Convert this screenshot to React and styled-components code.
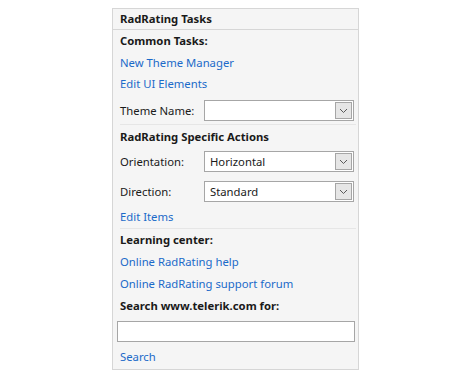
import React from "react";
import styled, { createGlobalStyle } from "styled-components";

const GlobalStyle = createGlobalStyle`
    html, body {
        margin: 0;
        padding: 0;
        background: #ffffff;
    }
    body {
        font-family: "Noto Sans", "Open Sans", sans-serif;
        font-size: 11.3px;
        color: #1a1a1a;
    }
`;

const Panel = styled.div`
    box-sizing: border-box;
    width: 247px;
    height: 362px;
    margin: 8px 0 0 112px;
    background: #f5f5f5;
    border: 1px solid #d6d6d6;
    display: flex;
    flex-direction: column;
`;

const Header = styled.div`
    height: 20px;
    line-height: 20px;
    padding-left: 7px;
    font-weight: 700;
    border-bottom: 1px solid #d6d6d6;
`;

const Body = styled.div`
    display: flex;
    flex-direction: column;
    padding: 0 2px 0 7px;
`;

const Title = styled.div`
    height: ${(p) => p.$h || 22}px;
    line-height: ${(p) => p.$h || 22}px;
    font-weight: 700;
    white-space: nowrap;
`;

const Link = styled.a`
    display: block;
    height: ${(p) => p.$h || 21}px;
    line-height: ${(p) => p.$h || 21}px;
    margin-top: ${(p) => p.$top || 0}px;
    color: #1b6ac9;
    text-decoration: none;
    white-space: nowrap;
    cursor: pointer;
`;

const Field = styled.div`
    display: flex;
    align-items: center;
    margin-top: ${(p) => p.$top || 0}px;
`;

const Label = styled.div`
    width: 84px;
    flex: none;
`;

const Combo = styled.div`
    box-sizing: border-box;
    width: 150px;
    height: 21px;
    border: 1px solid #a6a6a6;
    background: #ffffff;
    display: flex;
    align-items: center;
    padding: 0 1px 0 5px;
`;

const ComboText = styled.span`
    flex: 1;
    line-height: 19px;
`;

const DropButton = styled.span`
    box-sizing: border-box;
    width: 17px;
    height: 17px;
    border: 1px solid #a6a6a6;
    background: #e6e6e6;
    display: flex;
    align-items: center;
    justify-content: center;
`;

const Separator = styled.div`
    height: 1px;
    background: #e6e6e6;
    margin-top: ${(p) => p.$top || 0}px;
`;

const SearchBox = styled.input`
    box-sizing: border-box;
    width: 238px;
    height: 21px;
    margin: 4px 0 0 -3px;
    border: 1px solid #a6a6a6;
    background: #ffffff;
    outline: none;
`;

const Chevron = () => (
    <svg width="9" height="6" viewBox="0 0 9 6">
        <path d="M1 1 L4.5 4.5 L8 1" fill="none" stroke="#5a5a5a" strokeWidth="1" />
    </svg>
);

const ComboBox = ({ value }) => (
    <Combo>
        <ComboText>{value}</ComboText>
        <DropButton>
            <Chevron />
        </DropButton>
    </Combo>
);

const App = () => {
    return (
        <>
            <GlobalStyle />
            <Panel>
                <Header>RadRating Tasks</Header>
                <Body>
                    <Title>Common Tasks:</Title>
                    <Link>New Theme Manager</Link>
                    <Link>Edit UI Elements</Link>
                    <Field $top={6}>
                        <Label>Theme Name:</Label>
                        <ComboBox value="" />
                    </Field>
                    <Separator $top={3} />
                    <Title $h={23}>RadRating Specific Actions</Title>
                    <Field $top={3}>
                        <Label>Orientation:</Label>
                        <ComboBox value="Horizontal" />
                    </Field>
                    <Field $top={9}>
                        <Label>Direction:</Label>
                        <ComboBox value="Standard" />
                    </Field>
                    <Link $h={23} $top={3}>Edit Items</Link>
                    <Separator />
                    <Title>Learning center:</Title>
                    <Link $h={22}>Online RadRating help</Link>
                    <Link>Online RadRating support forum</Link>
                    <Title $h={23}>Search www.telerik.com for:</Title>
                    <SearchBox />
                    <Link $h={22} $top={4}>Search</Link>
                </Body>
            </Panel>
        </>
    );
};

export default App;
